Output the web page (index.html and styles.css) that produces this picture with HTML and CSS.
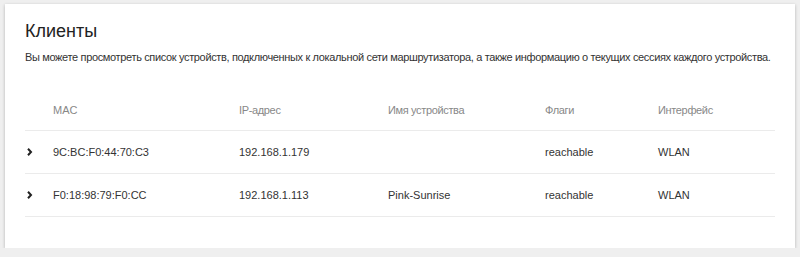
FILE: index.html
```html
<!DOCTYPE html>
<html lang="ru">
<head>
<meta charset="utf-8">
<title>Клиенты</title>
<link rel="stylesheet" href="styles.css">
</head>
<body>
<div class="card">
  <h1 class="title">Клиенты</h1>
  <p class="desc">Вы можете просмотреть список устройств, подключенных к локальной сети маршрутизатора, а также информацию о текущих сессиях каждого устройства.</p>
  <div class="table">
    <div class="row head">
      <div class="cell"></div>
      <div class="cell">MAC</div>
      <div class="cell cyr">IP-адрес</div>
      <div class="cell cyr">Имя устройства</div>
      <div class="cell cyr">Флаги</div>
      <div class="cell cyr">Интерфейс</div>
    </div>
    <div class="row">
      <div class="cell chev"><svg width="8" height="10" viewBox="0 0 8 10"><path d="M3 1.8 L6 5 L3 8.2" fill="none" stroke="#222" stroke-width="2"/></svg></div>
      <div class="cell">9C:BC:F0:44:70:C3</div>
      <div class="cell">192.168.1.179</div>
      <div class="cell"></div>
      <div class="cell">reachable</div>
      <div class="cell">WLAN</div>
    </div>
    <div class="row">
      <div class="cell chev"><svg width="8" height="10" viewBox="0 0 8 10"><path d="M3 1.8 L6 5 L3 8.2" fill="none" stroke="#222" stroke-width="2"/></svg></div>
      <div class="cell">F0:18:98:79:F0:CC</div>
      <div class="cell">192.168.1.113</div>
      <div class="cell">Pink-Sunrise</div>
      <div class="cell">reachable</div>
      <div class="cell">WLAN</div>
    </div>
  </div>
</div>
</body>
</html>
```
FILE: styles.css
```css
html, body {
  margin: 0;
  padding: 0;
}
body {
  background: #efefef;
  font-family: "Liberation Sans", Arial, sans-serif;
  color: #333;
  padding: 4px 5px 0 5px;
}
.card {
  background: #fff;
  box-shadow: 0 1px 3px rgba(0,0,0,0.25);
  padding: 16px 20px 31px 20px;
}
.title {
  margin: 0;
  font-size: 18px;
  font-weight: normal;
  line-height: 22px;
  color: #222;
}
.desc {
  margin: 8px 0 0 0;
  font-size: 11px;
  line-height: 14px;
  color: #333;
  letter-spacing: -0.35px;
  white-space: nowrap;
}
.table {
  margin-top: 26px;
}
.row {
  display: grid;
  grid-template-columns: 28px 186px 149px 157px 113px 1fr;
  align-items: center;
  height: 42px;
  border-bottom: 1px solid #ebebeb;
  font-size: 11px;
}
.row.head {
  height: 40px;
  color: #888;
}
.cyr {
  letter-spacing: -0.35px;
}
.chev {
  display: flex;
  align-items: center;
}
.chev svg { display: block; }
```
